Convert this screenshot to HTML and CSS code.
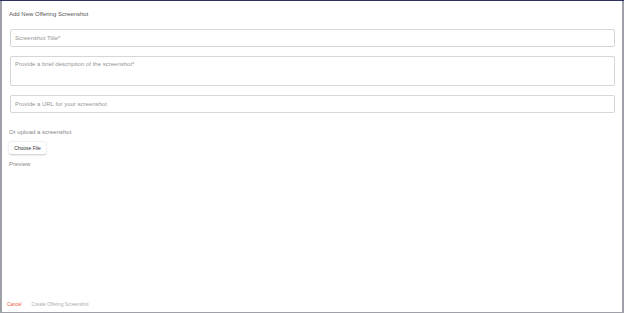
FILE: index.html
```html
<!DOCTYPE html>
<html>
<head>
<meta charset="utf-8">
<link rel="stylesheet" href="styles.css">
</head>
<body>
<div class="backdrop">
  <div class="modal">
    <div class="title">Add New Offering Screenshot</div>
    <div class="form">
      <div class="field input">Screenshot Title*</div>
      <div class="field textarea">Provide a brief description of the screenshot*</div>
      <div class="field input">Provide a URL for your screenshot</div>
    </div>
    <div class="upload">Or upload a screenshot</div>
    <div class="filebtn">Choose File</div>
    <div class="preview">Preview</div>
    <div class="spacer"></div>
    <div class="footer">
      <span class="cancel">Cancel</span>
      <span class="create">Create Offering Screenshot</span>
    </div>
  </div>
</div>
</body>
</html>
```
FILE: styles.css
```css
html, body {
  margin: 0;
  padding: 0;
  height: 100%;
}
body {
  background: #9ea0a8;
  font-family: "Liberation Sans", Arial, sans-serif;
}
.backdrop {
  height: 313px;
  box-sizing: border-box;
  border-top: 1px solid #2f3161;
  padding: 0 2px 1px 2px;
  display: flex;
}
.modal {
  flex: 1;
  background: #fff;
  display: flex;
  flex-direction: column;
  padding: 0 7px 0 7px;
}
.title {
  font-size: 6px;
  color: #555;
  margin-top: 9px;
  height: 10px;
  line-height: 8px;
}
.form {
  display: flex;
  flex-direction: column;
  gap: 9px;
  margin-top: 9px;
  padding-left: 1px;
}
.field {
  border: 1px solid #d6d6d6;
  border-radius: 2px;
  font-size: 6px;
  color: #959595;
  padding-left: 4px;
  box-sizing: border-box;
}
.input {
  height: 18px;
  line-height: 16px;
}
.textarea {
  height: 30px;
  padding-top: 3px;
  line-height: 8px;
}
.upload {
  font-size: 6px;
  color: #888;
  margin-top: 15px;
  line-height: 8px;
}
.filebtn {
  align-self: flex-start;
  margin-top: 6px;
  font-size: 5px;
  color: #333;
  width: 37px;
  height: 12px;
  line-height: 12px;
  text-align: center;
  border-radius: 2px;
  box-shadow: 0 0.5px 2px rgba(0,0,0,0.22);
}
.preview {
  font-size: 6px;
  color: #888;
  margin-top: 6px;
  line-height: 8px;
}
.spacer {
  flex: 1;
}
.footer {
  display: flex;
  gap: 10px;
  font-size: 4.7px;
  line-height: 8px;
  margin-bottom: 3px;
  margin-left: -2px;
}
.cancel {
  color: #f0573a;
}
.create {
  color: #adadad;
}
```
